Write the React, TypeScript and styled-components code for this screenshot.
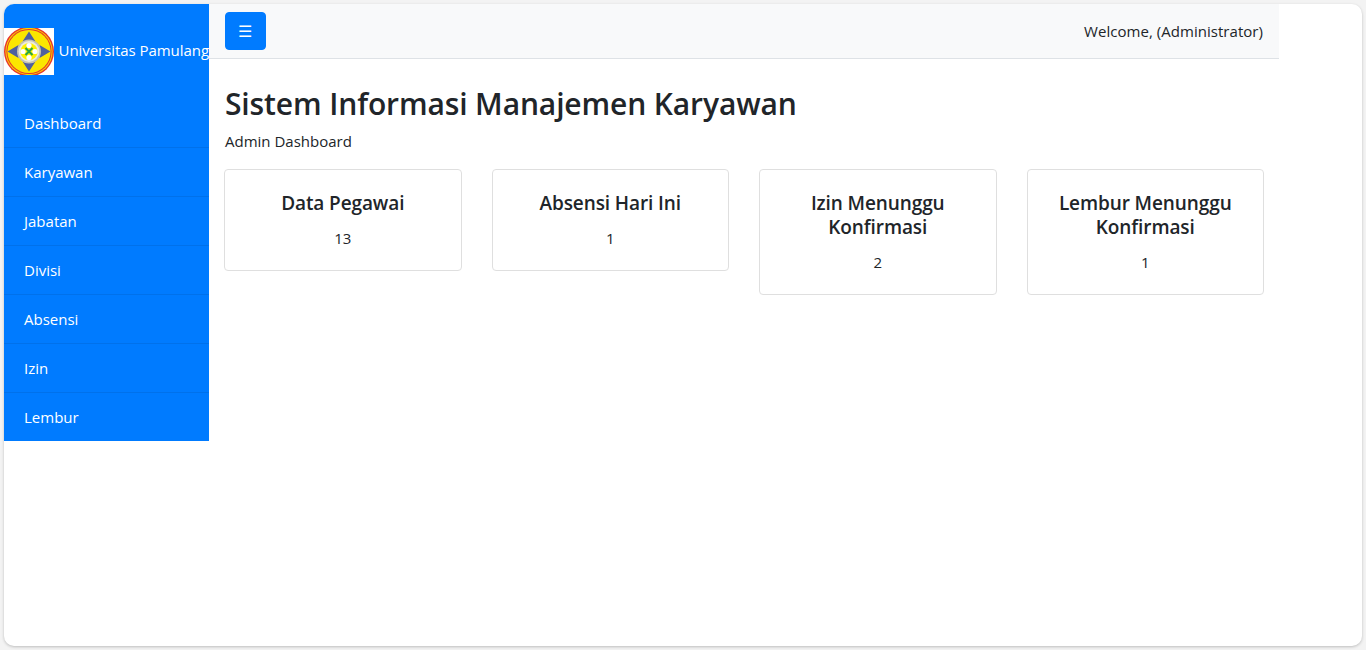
import React from "react";
import styled, { createGlobalStyle } from "styled-components";

const Global = createGlobalStyle`
  html, body { margin: 0; padding: 0; height: 100%; background: #f3f3f3; }
  body { font-family: "Open Sans", "Noto Sans", sans-serif; font-size: 16px; line-height: 24px; color: #212529; overflow: hidden; }
  * { box-sizing: border-box; }
`;

const Frame = styled.div`
  height: 650px;
  padding: 4px;
`;
const Window = styled.div`
  height: 642px;
  width: 1358px;
  background: #fff;
  border-radius: 10px;
  box-shadow: 0 1px 3px rgba(0, 0, 0, 0.22);
  overflow: hidden;
  display: flex;
  align-items: flex-start;
`;
const Sidebar = styled.aside`
  width: 205px;
  flex: none;
  background: #007bff;
  color: #fff;
`;
const Brand = styled.div`
  display: flex;
  align-items: center;
  padding: 24px 0;
  white-space: nowrap;
  font-size: 15px;
`;
const BrandName = styled.span`
  margin-bottom: 4px;
  letter-spacing: -0.05px;
`;
const LogoBox = styled.svg`
  width: 50px;
  height: 47px;
  flex: none;
  margin-right: 4.5px;
  background: #fff;
`;
const NavList = styled.nav`
  display: flex;
  flex-direction: column;
`;
const NavItem = styled.a<{ $last?: boolean }>`
  display: block;
  height: ${(p) => (p.$last ? "48px" : "49px")};
  padding: 12px 20px;
  font-size: 15px;
  color: #fff;
  border-bottom: ${(p) => (p.$last ? "none" : "1px solid rgba(0, 0, 0, 0.08)")};
`;
const Main = styled.main`
  width: 1070px;
  flex: none;
`;
const TopBar = styled.header`
  height: 55px;
  background: #f8f9fa;
  border-bottom: 1px solid #dee2e6;
  padding: 8px 16px;
  display: flex;
  align-items: center;
  justify-content: space-between;
`;
const MenuButton = styled.button`
  width: 41px;
  height: 38px;
  border: 1px solid #007bff;
  border-radius: 4px;
  background: #007bff;
  color: #fff;
  font-family: inherit;
  font-size: 16px;
  padding: 0 2px 0 0;
`;
const Welcome = styled.span`
  font-size: 15px;
  letter-spacing: 0.04px;
`;
const Content = styled.section`
  padding: 26px 15px 0;
`;
const Title = styled.h1`
  margin: 0 0 6px;
  padding-left: 1px;
  font-size: 30px;
  line-height: 38px;
  font-weight: 600;
  letter-spacing: -0.12px;
`;
const Subtitle = styled.p`
  margin: 0 0 16px;
  padding-left: 1px;
  font-size: 15px;
`;
const CardRow = styled.div`
  display: grid;
  grid-template-columns: repeat(4, 1fr);
  gap: 30px;
  align-items: start;
`;
const Card = styled.div`
  border: 1px solid #dfdfdf;
  border-radius: 4px;
  padding: 20px;
  text-align: center;
  background: #fff;
`;
const CardTitle = styled.h5`
  margin: 0 0 11px;
  padding-top: 1px;
  font-size: 19px;
  line-height: 24px;
  font-weight: 600;
  letter-spacing: -0.1px;
`;
const CardValue = styled.p`
  margin: 0;
  font-size: 15px;
`;

const Logo = () => (
  <LogoBox viewBox="0 0 50 47" aria-hidden="true">
    <circle cx="25" cy="23.5" r="25" fill="#e8352a" />
    <circle cx="25" cy="23.5" r="23.6" fill="#f7d800" />
    <circle cx="25" cy="23.5" r="22.6" fill="#e8352a" />
    <circle cx="25" cy="23.5" r="21.6" fill="#fbe600" />
    <path d="M25 3.5 L31.5 13.5 L18.5 13.5 Z M25 43.5 L31.5 33.5 L18.5 33.5 Z M3.5 23.5 L14.5 17 L14.5 30 Z M46.5 23.5 L35.5 17 L35.5 30 Z" fill="#4f5f9e" />
    <circle cx="25" cy="23.5" r="12" fill="#c3c1b2" />
    <circle cx="25" cy="23.5" r="10.4" fill="#ecebdd" />
    <circle cx="25" cy="23.5" r="8.6" fill="#fff200" />
    <circle cx="25" cy="17.5" r="2.6" fill="#fff" />
    <circle cx="25" cy="29.5" r="2.6" fill="#fff" />
    <circle cx="19" cy="23.5" r="2.6" fill="#fff" />
    <circle cx="31" cy="23.5" r="2.6" fill="#fff" />
    <path d="M21.5 20 L28.5 27 M28.5 20 L21.5 27" stroke="#2aa545" strokeWidth="2" />
  </LogoBox>
);

const navItems = ["Dashboard", "Karyawan", "Jabatan", "Divisi", "Absensi", "Izin", "Lembur"];
const cards = [
  { title: "Data Pegawai", value: "13" },
  { title: "Absensi Hari Ini", value: "1" },
  { title: "Izin Menunggu Konfirmasi", value: "2" },
  { title: "Lembur Menunggu Konfirmasi", value: "1" },
];

export default function App() {
  return (
    <Frame>
      <Global />
      <Window>
        <Sidebar>
          <Brand>
            <Logo />
            <BrandName>Universitas Pamulang</BrandName>
          </Brand>
          <NavList>
            {navItems.map((n, i) => (
              <NavItem key={n} $last={i === navItems.length - 1}>
                {n}
              </NavItem>
            ))}
          </NavList>
        </Sidebar>
        <Main>
          <TopBar>
            <MenuButton>☰</MenuButton>
            <Welcome>Welcome, (Administrator)</Welcome>
          </TopBar>
          <Content>
            <Title>Sistem Informasi Manajemen Karyawan</Title>
            <Subtitle>Admin Dashboard</Subtitle>
            <CardRow>
              {cards.map((c) => (
                <Card key={c.title}>
                  <CardTitle>{c.title}</CardTitle>
                  <CardValue>{c.value}</CardValue>
                </Card>
              ))}
            </CardRow>
          </Content>
        </Main>
      </Window>
    </Frame>
  );
}
